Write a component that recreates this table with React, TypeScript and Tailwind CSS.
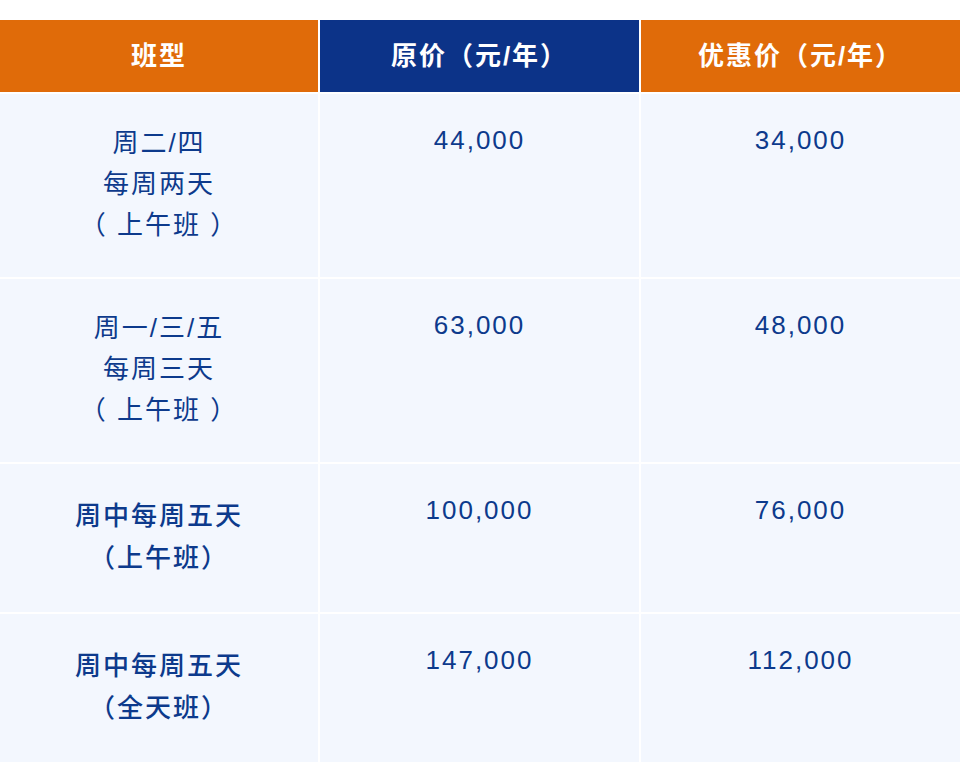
const rows = [
  {
    label: ["周二/四", "每周两天", "（ 上午班 ）"],
    price: "44,000",
    deal: "34,000",
    tall: true,
  },
  {
    label: ["周一/三/五", "每周三天", "（ 上午班 ）"],
    price: "63,000",
    deal: "48,000",
    tall: true,
  },
  {
    label: ["周中每周五天", "（上午班）"],
    price: "100,000",
    deal: "76,000",
    tall: false,
  },
  {
    label: ["周中每周五天", "（全天班）"],
    price: "147,000",
    deal: "112,000",
    tall: false,
  },
];

export default function App() {
  return (
    <div
      className="w-[960px] h-[782px] bg-white pt-5 text-[#0d3a8c]"
      style={{ fontFamily: '"Liberation Sans", "Noto Sans CJK SC", sans-serif' }}
    >
      <div className="grid grid-cols-[318px_319px_319px] gap-[2px]">
        {/* Header */}
        <div className="h-[72px] bg-[#e06b09] flex items-center justify-center text-white text-[26px] font-bold tracking-[2px]">
          班型
        </div>
        <div className="h-[72px] bg-[#0c3388] flex items-center justify-center text-white text-[26px] font-bold tracking-[2px]">
          原价（元/年）
        </div>
        <div className="h-[72px] bg-[#e06b09] flex items-center justify-center text-white text-[26px] font-bold tracking-[2px]">
          优惠价（元/年）
        </div>

        {/* Body rows */}
        {rows.map((r, i) => (
          <div key={i} className="contents">
            <div
              className={
                r.tall
                  ? "h-[183px] bg-[#f3f7fe] pt-[29px] text-center text-[26px] leading-[41px] tracking-[2px]"
                  : "h-[148px] bg-[#f3f7fe] pt-[31px] text-center text-[26px] leading-[42px] tracking-[2px] font-medium"
              }
            >
              {r.label.map((l, j) => (
                <div key={j} className="whitespace-pre">
                  {l}
                </div>
              ))}
            </div>
            <div
              className={
                (r.tall ? "h-[183px]" : "h-[148px]") +
                " bg-[#f3f7fe] pt-[26px] text-center text-[26px] leading-[41px] tracking-[2px]"
              }
            >
              {r.price}
            </div>
            <div
              className={
                (r.tall ? "h-[183px]" : "h-[148px]") +
                " bg-[#f3f7fe] pt-[26px] text-center text-[26px] leading-[41px] tracking-[2px]"
              }
            >
              {r.deal}
            </div>
          </div>
        ))}
      </div>
    </div>
  );
}
